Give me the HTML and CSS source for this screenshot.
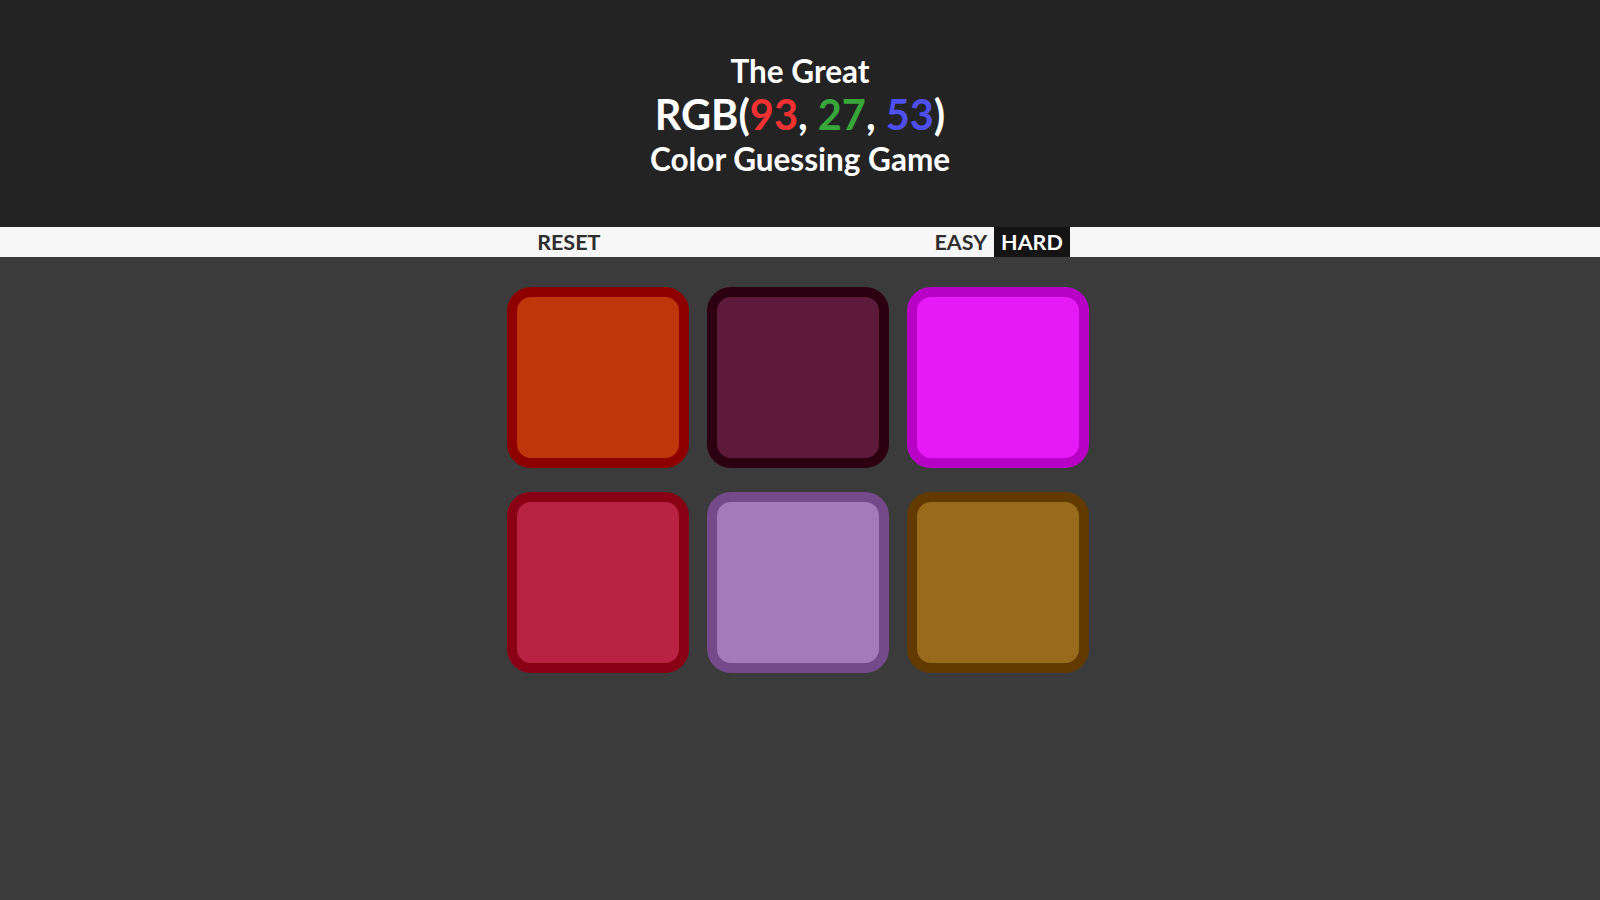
FILE: index.html
```html
<!DOCTYPE html>
<html lang="en">
<head>
<meta charset="utf-8">
<title>Color Game</title>
<link rel="stylesheet" href="styles.css">
</head>
<body>
<header class="header">
  <div class="title-line">The Great</div>
  <div class="color-display">RGB(<span class="c-red">93</span>, <span class="c-green">27</span>, <span class="c-blue">53</span>)</div>
  <div class="title-line">Color Guessing Game</div>
</header>
<nav class="stripe">
  <button class="btn">Reset</button>
  <span class="message"></span>
  <button class="btn">Easy</button>
  <button class="btn selected">Hard</button>
</nav>
<main class="board">
  <div class="square sq1"></div>
  <div class="square sq2"></div>
  <div class="square sq3"></div>
  <div class="square sq4"></div>
  <div class="square sq5"></div>
  <div class="square sq6"></div>
</main>
</body>
</html>
```
FILE: styles.css
```css
html, body {
  margin: 0;
  padding: 0;
}
body {
  background: #3b3b3b;
  font-family: Lato, "Open Sans", sans-serif;
  height: 900px;
  overflow: hidden;
}
.header {
  background: #232323;
  color: #fff;
  text-align: center;
  font-weight: 700;
  padding: 53px 0 0;
  height: 227px;
  box-sizing: border-box;
}
.title-line {
  font-size: 31.5px;
  line-height: 36px;
}
.color-display {
  font-size: 41.5px;
  line-height: 47px;
  margin: 2px 0 3px;
}
.c-red { color: #f23232; }
.c-green { color: #38a63a; }
.c-blue { color: #4f4ff0; }

.stripe {
  background: #f7f7f7;
  height: 30px;
  display: flex;
  justify-content: center;
  align-items: stretch;
}
.btn {
  box-sizing: border-box;
  border: none;
  background: none;
  margin: 0;
  padding: 0 7px;
  font-family: Lato, "Open Sans", sans-serif;
  font-weight: 700;
  font-size: 21.5px;
  line-height: 26px;
  text-transform: uppercase;
  color: #2e2e2e;
  height: 30px;
  cursor: pointer;
}
.btn.selected {
  background: #141414;
  color: #fff;
}
.message {
  display: inline-block;
  width: 20%;
}
.board {
  display: grid;
  grid-template-columns: repeat(3, 182px);
  grid-auto-rows: 181px;
  column-gap: 18px;
  row-gap: 24px;
  width: 582px;
  margin: 30px calc(50% - 289px) 0 calc(50% - 293px);
}
.square {
  box-sizing: border-box;
  border: 10px solid;
  border-radius: 24px;
}
.sq1 { background: #bf360a; border-color: #8e0000; }
.sq2 { background: #5e1a3a; border-color: #2c0010; }
.sq3 { background: #e61af6; border-color: #b800c7; }
.sq4 { background: #b92343; border-color: #8a0014; }
.sq5 { background: #a47bb8; border-color: #744a8a; }
.sq6 { background: #976b1b; border-color: #623a00; }
```
